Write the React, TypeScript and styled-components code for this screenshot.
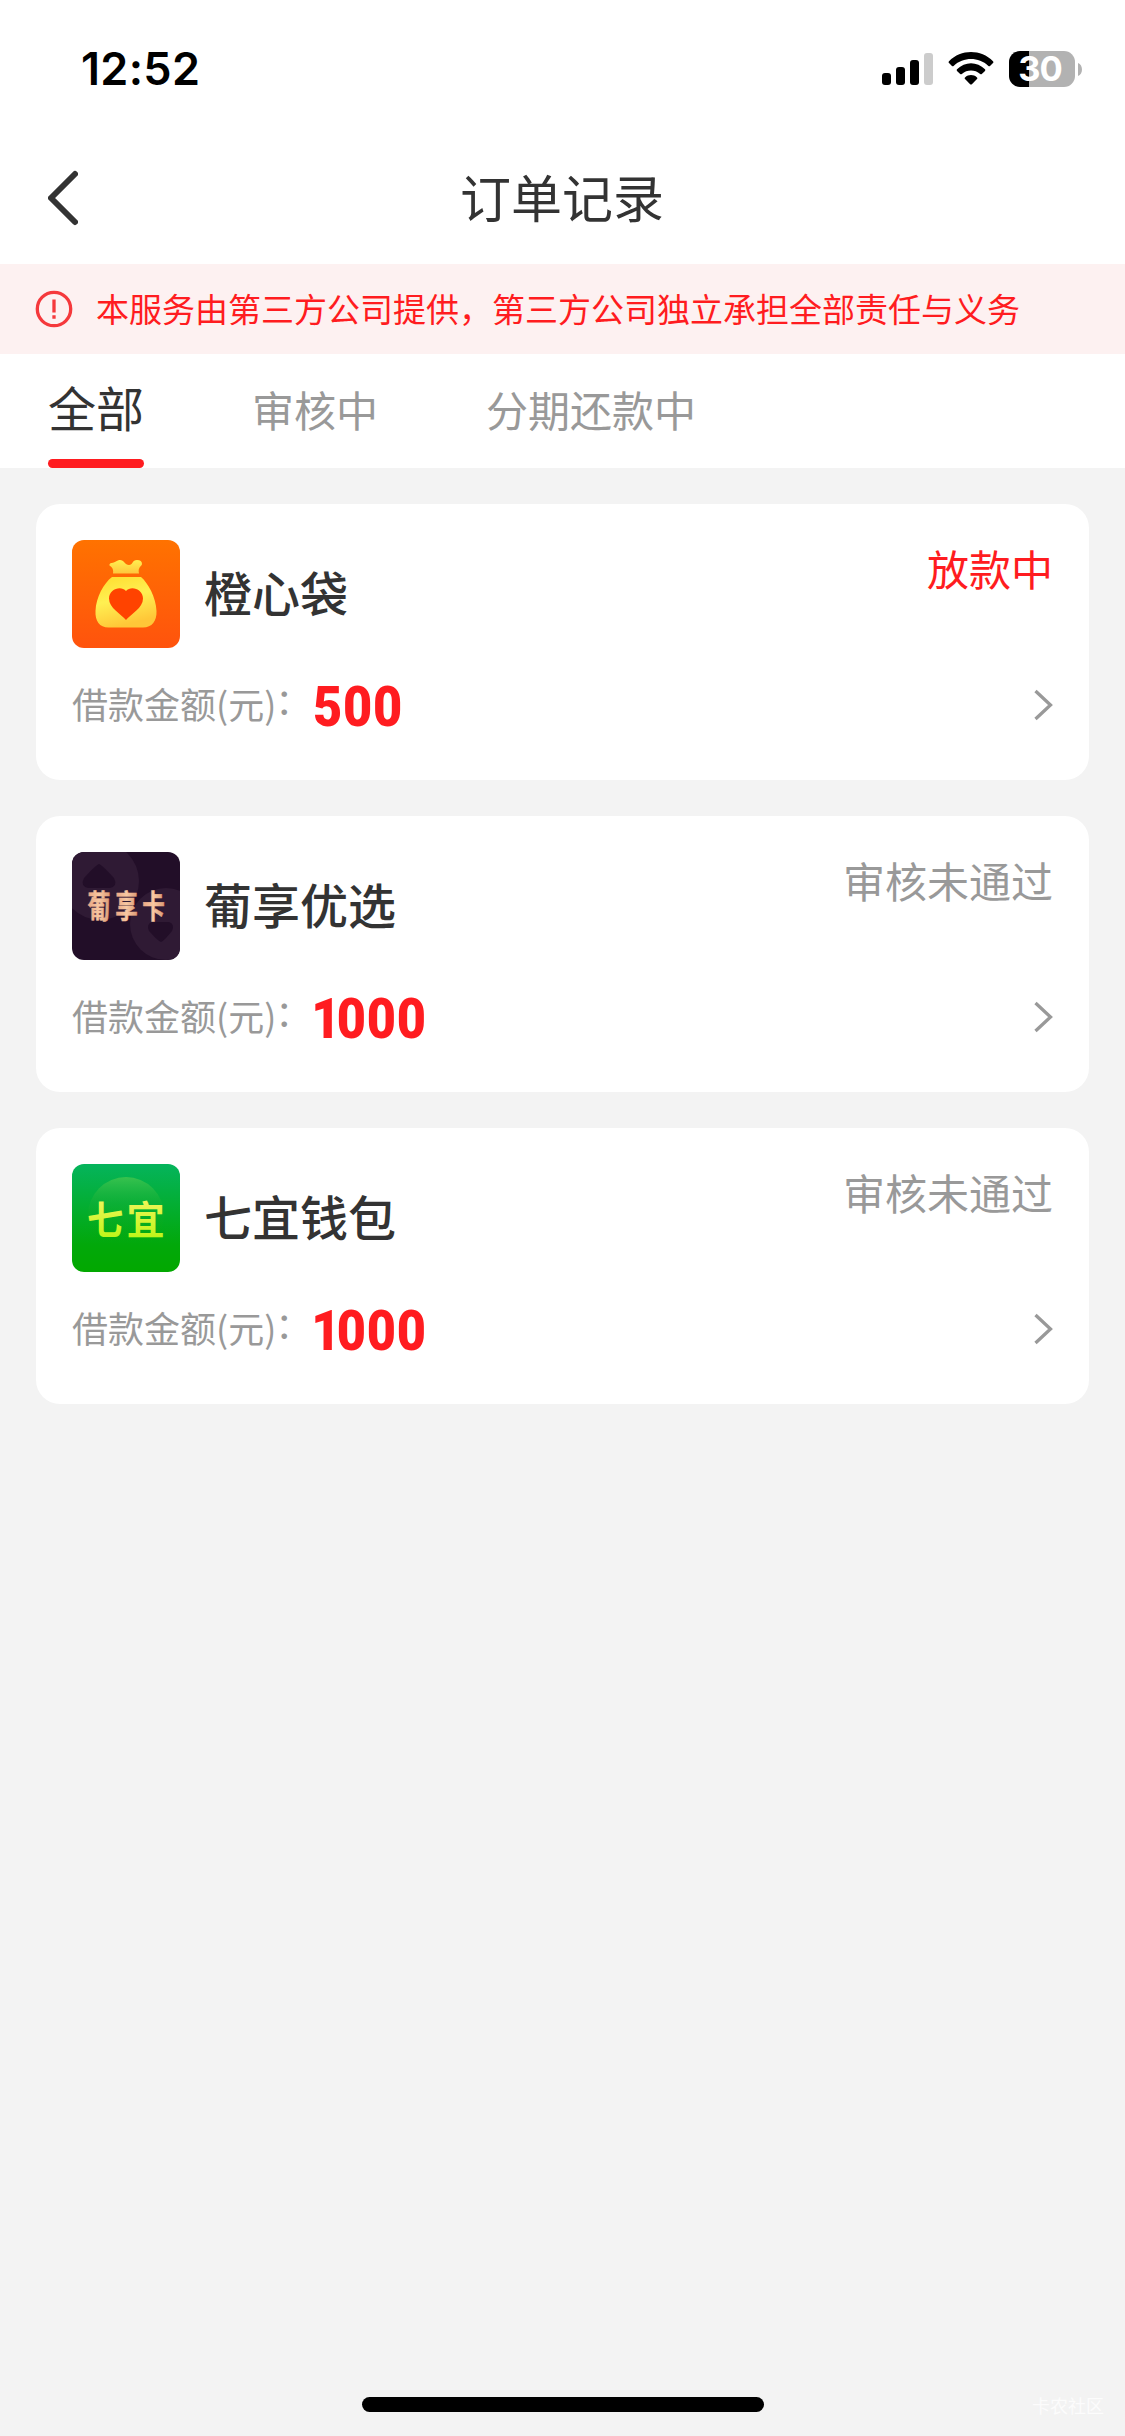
import React from "react";
import styled, { createGlobalStyle } from "styled-components";

const cjk = `"Noto Sans CJK SC", "Noto Sans", sans-serif`;

const GlobalStyle = createGlobalStyle`
  body { margin: 0; background: #f3f3f3; font-family: ${cjk}; }
  * { box-sizing: border-box; }
  svg { display: block; flex: none; }
`;

const Screen = styled.div`
  display: flex;
  flex-direction: column;
  width: 1125px;
  height: 2436px;
  overflow: hidden;
  background: #f3f3f3;
  color: #333;
`;

const StatusBar = styled.header`
  display: flex;
  justify-content: space-between;
  height: 132px;
  padding: 0 43px 0 81px;
  background: #fff;
`;

const Clock = styled.time`
  margin-top: 39px;
  font: 600 45px/60px Inter, sans-serif;
  letter-spacing: 0.3px;
  color: #000;
`;

const StatusIcons = styled.div`
  display: flex;
  padding-top: 51px;
`;

const BatteryBody = styled.div`
  display: flex;
  align-items: center;
  justify-content: center;
  width: 66px;
  height: 36px;
  margin-left: 15px;
  padding-right: 4px;
  border-radius: 11px;
  background: linear-gradient(90deg, #000 20px, #b2b2b2 20px);
  color: #fff;
  font: 700 34.5px/36px Inter, sans-serif;
  letter-spacing: -1px;
`;

const NavBar = styled.nav`
  display: grid;
  grid-template-columns: 120px 1fr 120px;
  align-items: center;
  height: 132px;
  background: #fff;
`;

const BackButton = styled.button`
  display: flex;
  padding: 0 0 0 48px;
  border: 0;
  background: none;
`;

const Title = styled.h1`
  margin: 0;
  padding: 0 1px 4px 0;
  text-align: center;
  font-size: 51px;
  font-weight: 400;
  line-height: 76px;
`;

const Notice = styled.div`
  display: flex;
  align-items: center;
  gap: 23px;
  height: 90px;
  padding: 0 35px;
  background: #fdf1f1;
  color: #ff1c20;
  font-size: 33px;
  line-height: 48px;
  white-space: nowrap;
`;

const NoticeText = styled.span`
  padding-bottom: 3px;
`;

const Tabs = styled.div`
  display: flex;
  align-items: baseline;
  gap: 108px;
  height: 114px;
  padding: 0 48px;
  background: #fff;
`;

const Tab = styled.div<{ $active?: boolean }>`
  height: 114px;
  font-size: ${(p) => (p.$active ? 48 : 42)}px;
  line-height: 105px;
  color: ${(p) => (p.$active ? "#333" : "#999")};
  white-space: nowrap;
`;

const TabLine = styled.div`
  height: 9px;
  border-radius: 4.5px;
  background: #ff1c20;
`;

const List = styled.main`
  display: flex;
  flex: 1;
  flex-direction: column;
  gap: 36px;
  padding: 36px;
`;

const Card = styled.article`
  height: 276px;
  padding: 36px;
  border-radius: 24px;
  background: #fff;
`;

const CardHead = styled.div`
  display: flex;
  height: 108px;
`;

const Name = styled.h2`
  flex: 1;
  margin: 0;
  padding-left: 24px;
  font-size: 48px;
  font-weight: 500;
  line-height: 102px;
`;

const Status = styled.span<{ $hot?: boolean }>`
  font-size: 42px;
  line-height: 56px;
  color: ${(p) => (p.$hot ? "#ff1c20" : "#999")};
`;

const CardRow = styled.div`
  display: flex;
  align-items: center;
  height: 60px;
  margin-top: 27px;
`;

const Label = styled.span`
  width: 241px;
  padding-bottom: 4px;
  font-size: 36px;
  line-height: 56px;
  color: #999;
  white-space: nowrap;
`;

const Colon = styled.span`
  margin-left: -1px;
  line-height: 1;
  vertical-align: 4px;
`;

const Amount = styled.strong`
  flex: 1;
  padding-top: 3px;
  font: 900 56px/60px Roboto, sans-serif;
  letter-spacing: 0.9px;
  color: #ff1c20;
  transform: scaleX(0.9);
  transform-origin: 0 50%;
`;

const NarrowDigit = styled.span`
  margin-left: -2px;
  letter-spacing: -4px;
`;

const Footer = styled.footer`
  display: grid;
  grid-template-columns: 362px 402px 1fr;
  height: 50px;
  padding-top: 11px;
`;

const HomeIndicator = styled.div`
  height: 15px;
  border-radius: 8px;
  background: #000;
`;

const Watermark = styled.span`
  padding-right: 21px;
  text-align: right;
  font-size: 18px;
  line-height: 17px;
  color: #fcfcfc;
`;

const Signal = () => (
  <svg width="52" height="36" viewBox="0 0 52 36">
    <rect x="0" y="22" width="9" height="12" rx="3" />
    <rect x="14" y="16" width="9" height="18" rx="3" />
    <rect x="28" y="9" width="9" height="25" rx="3" />
    <rect x="42" y="2" width="9" height="32" rx="3" fill="#ccc" />
  </svg>
);

const WifiSvg = styled.svg`
  margin-left: 14px;
`;

const Wifi = () => (
  <WifiSvg width="46" height="36" viewBox="0 0 46 36">
    <path d="M1 10.3C13-2 33-2 45 10.3Q45.8 11.2 45 12L42 15Q41.2 15.6 40.4 14.9C30.5 5.8 15.5 5.8 5.6 14.9Q4.8 15.6 4 15L1 12Q.2 11.2 1 10.3Z" />
    <path d="M9 18.3C17 10.2 29 10.2 37 18.3Q37.7 19.1 37 19.9L33.8 23Q33 23.7 32.2 23C26.8 18.4 19.2 18.4 13.8 23Q13 23.7 12.2 23L9 19.9Q8.3 19.1 9 18.3Z" />
    <path d="M17 26.4C20.5 23.3 25.5 23.3 29 26.4Q29.9 27.2 29 28.1L23.9 33.2Q23 34 22.1 33.2L17 28.1Q16.1 27.2 17 26.4Z" />
  </WifiSvg>
);

const BatteryCap = () => (
  <svg width="7" height="36" viewBox="0 0 7 36">
    <path d="M3 12C8.3 14 8.3 23 3 25Z" fill="#b2b2b2" />
  </svg>
);

const BackIcon = () => (
  <svg width="30" height="56" viewBox="0 0 30 56" fill="none" stroke="#333" strokeWidth="6" strokeLinecap="round" strokeLinejoin="round">
    <path d="M27 4L3 28L27 52" />
  </svg>
);

const AlertIcon = () => (
  <svg width="38" height="38" viewBox="0 0 38 38" fill="none" stroke="#f5393c" strokeWidth="3.3">
    <circle cx="19" cy="19" r="16.7" />
    <path d="M19 9.5V22.5M19 25.2V28.8" />
  </svg>
);

const Arrow = () => (
  <svg width="19" height="32" viewBox="0 0 19 32" fill="none" stroke="#999" strokeWidth="3.3">
    <path d="M1.500 2L16.500 16L1.500 30" />
  </svg>
);

const BagLogo = () => (
  <svg width="108" height="108" viewBox="0 0 108 108">
    <defs>
      <linearGradient id="bagBg" x2="0" y2="1">
        <stop stopColor="#ff7200" />
        <stop offset="1" stopColor="#ff530d" />
      </linearGradient>
      <linearGradient id="bagTop" x2="0" y2="1">
        <stop stopColor="#fff050" />
        <stop offset="1" stopColor="#ffc63c" />
      </linearGradient>
      <linearGradient id="bagBody" x2=".3" y2="1">
        <stop stopColor="#ffdc2e" />
        <stop offset=".5" stopColor="#fff052" />
        <stop offset="1" stopColor="#ffc738" />
      </linearGradient>
    </defs>
    <rect width="108" height="108" rx="12" fill="url(#bagBg)" />
    <path d="M41 33.5Q42 28 37.5 25.5Q37 23.5 39.5 23C44 22.5 45 20 48 20C52 20 53 25 57 25C61 25 60 20 65 20Q70 20 70 24C70 26 65.5 27 67 33.5Z" fill="url(#bagTop)" />
    <path d="M40 37H69C76 43 84 57 84.5 71C85 81 80 87.5 71 87.5H36.5C27.5 87.5 23 81 23.5 71C24 57 32 43 40 37Z" fill="url(#bagBody)" />
    <path d="M54 80C49 74 37 68 37 58.5C37 49 49 45 54 51C59 45 71 49 71 58.5C71 68 59 74 54 80Z" fill="#ff4300" />
  </svg>
);

const GrapeLogo = () => (
  <svg width="108" height="108" viewBox="0 0 108 108">
    <defs>
      <clipPath id="grapeClip">
        <rect width="108" height="108" rx="12" />
      </clipPath>
      <linearGradient id="grapeInk" x2="1" y2="0">
        <stop stopColor="#e9a582" />
        <stop offset=".5" stopColor="#f8c8a2" />
        <stop offset="1" stopColor="#d99773" />
      </linearGradient>
    </defs>
    <g clipPath="url(#grapeClip)">
      <rect width="108" height="108" fill="#220e28" />
      <circle cx="28" cy="29" r="39" fill="#2f1a34" />
      <circle cx="94" cy="72" r="36" fill="#2f1a34" />
      <path d="M27 12Q29 12 42 26Q46 34 38 36H16Q8 34 12 26Q25 12 27 12Z" fill="#220e28" />
      <path d="M89 90Q87 90 77 79Q74 72 80 70H97Q103 72 100 79Q91 90 89 90Z" fill="#220e28" />
    </g>
    <g fill="url(#grapeInk)" stroke="url(#grapeInk)" strokeWidth=".4" fontSize="24" fontWeight="700" fontFamily={cjk} textAnchor="middle">
      <text transform="translate(27 66) scale(.96 1.33)">葡</text>
      <text transform="translate(54.5 66) scale(.94 1.33)">享</text>
      <text transform="translate(81.5 66) scale(.94 1.33)">卡</text>
    </g>
  </svg>
);

const WalletLogo = () => (
  <svg width="108" height="108" viewBox="0 0 108 108">
    <defs>
      <linearGradient id="walletBg" x2="0" y2="1">
        <stop stopColor="#05b45c" />
        <stop offset=".75" stopColor="#02a80a" />
        <stop offset="1" stopColor="#02a800" />
      </linearGradient>
      <linearGradient id="walletDisc" x2="0" y2="1">
        <stop stopColor="#38c24e" />
        <stop offset=".35" stopColor="#18b038" stopOpacity=".4" />
        <stop offset=".9" stopColor="#02a800" stopOpacity="0" />
      </linearGradient>
      <linearGradient id="walletInk" x2="0" y2="1">
        <stop stopColor="#fff56c" />
        <stop offset="1" stopColor="#b4f50c" />
      </linearGradient>
    </defs>
    <rect width="108" height="108" rx="12" fill="url(#walletBg)" />
    <circle cx="54" cy="51" r="38" fill="url(#walletDisc)" />
    <g fill="url(#walletInk)" fontSize="39" fontWeight="700" fontFamily={cjk} textAnchor="middle">
      <text transform="translate(33 70) scale(.93 1)">七</text>
      <text transform="translate(73.5 70) scale(.98 1)">宜</text>
    </g>
  </svg>
);

const orders = [
  { name: "橙心袋", status: "放款中", hot: true, amount: "500", Logo: BagLogo },
  { name: "葡享优选", status: "审核未通过", hot: false, amount: "1000", Logo: GrapeLogo },
  { name: "七宜钱包", status: "审核未通过", hot: false, amount: "1000", Logo: WalletLogo },
];

export default function App() {
  return (
    <Screen>
      <GlobalStyle />
      <StatusBar>
        <Clock>12:52</Clock>
        <StatusIcons>
          <Signal />
          <Wifi />
          <BatteryBody>30</BatteryBody>
          <BatteryCap />
        </StatusIcons>
      </StatusBar>
      <NavBar>
        <BackButton aria-label="返回">
          <BackIcon />
        </BackButton>
        <Title>订单记录</Title>
      </NavBar>
      <Notice>
        <AlertIcon />
        <NoticeText>本服务由第三方公司提供，第三方公司独立承担全部责任与义务</NoticeText>
      </Notice>
      <Tabs>
        <Tab $active>
          全部
          <TabLine />
        </Tab>
        <Tab>审核中</Tab>
        <Tab>分期还款中</Tab>
      </Tabs>
      <List>
        {orders.map(({ name, status, hot, amount, Logo }) => (
          <Card key={name}>
            <CardHead>
              <Logo />
              <Name>{name}</Name>
              <Status $hot={hot}>{status}</Status>
            </CardHead>
            <CardRow>
              <Label>
                借款金额(元)<Colon>：</Colon>
              </Label>
              <Amount>
                {amount.startsWith("1") ? <NarrowDigit>1</NarrowDigit> : amount[0]}
                {amount.slice(1)}
              </Amount>
              <Arrow />
            </CardRow>
          </Card>
        ))}
      </List>
      <Footer>
        <span />
        <HomeIndicator />
        <Watermark>卡农社区</Watermark>
      </Footer>
    </Screen>
  );
}
